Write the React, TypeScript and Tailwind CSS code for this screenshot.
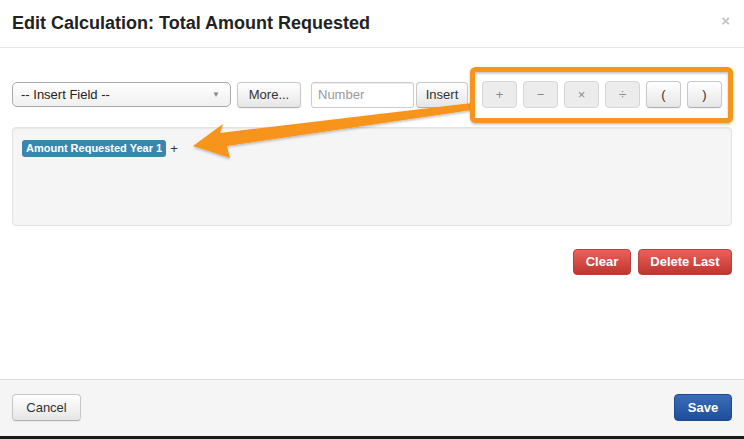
import React from "react";

const font = { fontFamily: '"Liberation Sans", Arial, sans-serif' };

const btn =
  "flex items-center justify-center rounded-[4px] border border-[#c8c8c8] border-b-[#b0b0b0] bg-gradient-to-b from-white to-[#e6e6e6] text-[#333] shadow-[inset_0_1px_0_rgba(255,255,255,0.3),0_1px_2px_rgba(0,0,0,0.05)]";

const opBtn =
  "flex h-[27px] w-[35px] items-center justify-center rounded-[4px] border border-[#d6d6d6] bg-[#ececec] text-[13px] text-[#8a8a8a]";

function OrangeArrow() {
  return (
    <svg className="pointer-events-none absolute left-0 top-0" width="744" height="439">
      <defs>
        <filter id="sh" x="-10%" y="-10%" width="120%" height="140%">
          <feDropShadow dx="0" dy="1.5" stdDeviation="1.2" floodColor="#000" floodOpacity="0.25" />
        </filter>
      </defs>
      <polygon
        points="193,146 223,124 220,133 472,103 472,110 227,146 230,158"
        fill="#f7941d"
        filter="url(#sh)"
      />
      <rect
        x="472.5"
        y="69.5"
        width="258"
        height="51"
        rx="3"
        fill="none"
        stroke="#f7941d"
        strokeWidth="5"
        filter="url(#sh)"
      />
    </svg>
  );
}

export default function App() {
  return (
    <div className="relative flex h-[439px] w-[744px] flex-col bg-white" style={font}>
      <div className="flex h-[48px] items-center justify-between border-b border-[#e5e5e5] pl-3 pr-[12px]">
        <h3 className="text-[18px] font-bold tracking-[0px] text-[#222]">
          Edit Calculation: Total Amount Requested
        </h3>
        <span className="mr-[2px] mt-[-4px] text-[15px] font-bold text-[#c4c4c4]">×</span>
      </div>

      <div className="flex flex-1 flex-col px-3 pt-[33px]">
        <div className="flex h-[27px] items-center">
          <div className="flex h-[25px] w-[219px] items-center justify-between rounded-[5px] border border-[#aaa] bg-gradient-to-b from-white to-[#f0f0f0] pl-[8px] pr-[10px] text-[13px] text-[#222]">
            <span>-- Insert Field --</span>
            <span className="text-[8px] text-[#888]">▼</span>
          </div>
          <div className={`${btn} ml-[6px] h-[26px] w-[64px] text-[13px]`}>More...</div>
          <div className="ml-[10px] flex h-[26px] w-[103px] items-center rounded-[3px] border border-[#ccc] bg-white px-[6px] text-[13px] text-[#999] shadow-[inset_0_1px_1px_rgba(0,0,0,0.075)]">
            Number
          </div>
          <div className={`${btn} ml-[2px] h-[26px] w-[52px] text-[13px]`}>Insert</div>
          <div className="ml-[14px] flex gap-[6px]">
            <div className={opBtn}>+</div>
            <div className={opBtn}>−</div>
            <div className={opBtn}>×</div>
            <div className={opBtn}>÷</div>
            <div className={`${btn} h-[27px] w-[35px] text-[13px]`}>(</div>
            <div className={`${btn} h-[27px] w-[35px] text-[13px]`}>)</div>
          </div>
        </div>

        <div className="mt-[19px] h-[99px] rounded-[4px] border border-[#e3e3e3] bg-[#f5f5f5] px-[9px] pt-[11px] shadow-[inset_0_1px_1px_rgba(0,0,0,0.05)]">
          <div className="flex items-center">
            <span className="rounded-[3px] bg-[#3a87ad] px-[4px] py-[2px] text-[11px] font-bold leading-[13px] text-white">
              Amount Requested Year 1
            </span>
            <span className="ml-[4px] text-[13px] text-[#333]">+</span>
          </div>
        </div>

        <div className="mt-[23px] flex justify-end gap-[7px]">
          <div className="flex h-[26px] w-[58px] items-center justify-center rounded-[4px] border border-[#b8403a] bg-gradient-to-b from-[#ee5f5b] to-[#bd362f] text-[13px] font-bold text-white">
            Clear
          </div>
          <div className="flex h-[26px] w-[94px] items-center justify-center rounded-[4px] border border-[#b8403a] bg-gradient-to-b from-[#ee5f5b] to-[#bd362f] text-[13px] font-bold text-white">
            Delete Last
          </div>
        </div>
      </div>

      <div className="flex h-[57px] items-start justify-between border-t border-[#ddd] bg-[#f5f5f5] px-3 pt-[14px]">
        <div className={`${btn} h-[27px] w-[69px] text-[13px]`}>Cancel</div>
        <div className="flex h-[27px] w-[58px] items-center justify-center rounded-[4px] border border-[#1d4a8c] bg-gradient-to-b from-[#3b6cb8] to-[#1f4f9c] text-[13px] font-bold text-white">
          Save
        </div>
      </div>
      <div className="h-[3px] bg-[#1b1b1b]" />

      <OrangeArrow />
    </div>
  );
}
